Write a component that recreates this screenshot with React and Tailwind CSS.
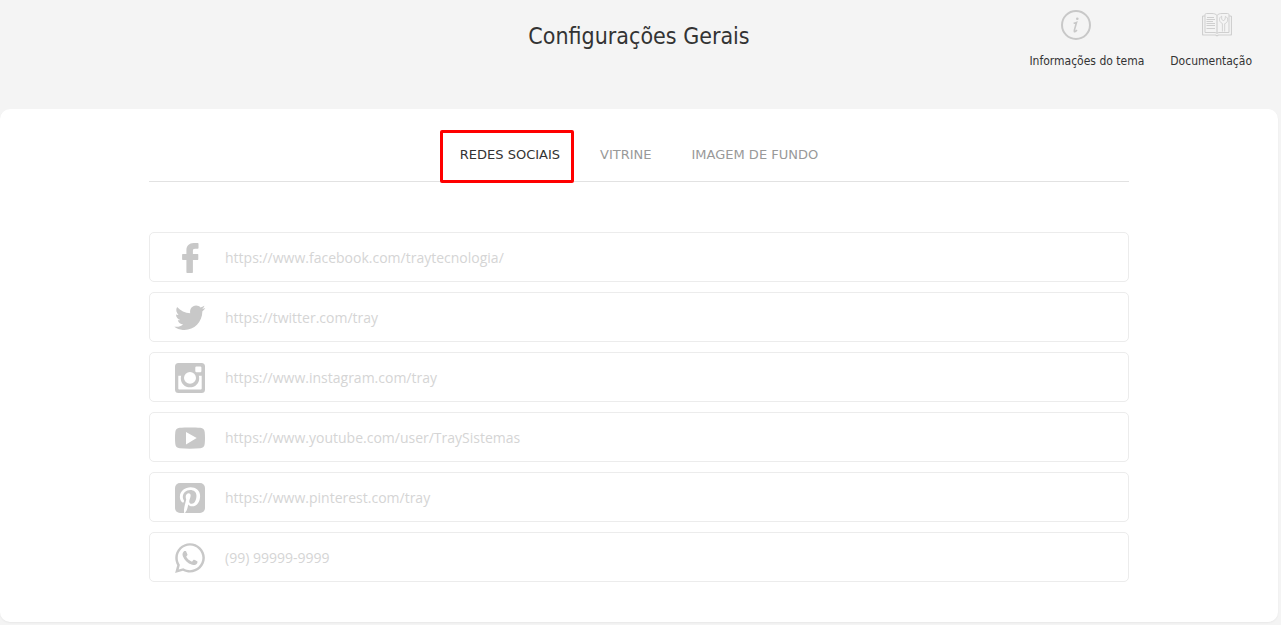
import { useState } from 'react'
import { FaPinterestP, FaWhatsapp } from 'react-icons/fa'

const TABS = ['Redes sociais', 'Vitrine', 'Imagem de fundo']

function FacebookIcon() {
  return (
    <svg viewBox="0 0 30 30" className="w-[30px] h-[30px]" fill="currentColor">
      <path d="M22.800.1h-4.200c-4.400 0-7.200 2.900-7.200 7.300v3.500H7.800c-.4 0-.7.3-.7.700v4.600c0 .4.300.700.7.700h3.600v12.400c0 .4.300.700.7.700h5.100c.4 0 .7-.3.700-.7V16.900h4.700c.4 0 .7-.3.700-.7v-4.600c0-.4-.3-.7-.7-.7h-4.700V8c0-1.400.4-2.200 2.200-2.200h2.700c.4 0 .7-.3.700-.7V.8c0-.4-.3-.7-.7-.7z"/>
    </svg>
  )
}

function TwitterIcon() {
  return (
    <svg viewBox="0 0 32 30" className="w-8 h-[30px]" fill="currentColor">
      <path d="M.300 23.700c3.500.5 6.500-.3 8.800-2.300-2.500-.3-4.600-1.700-5.300-4.200.9.200 1.700.1 2.500-.1-2.500-.9-4.200-2.900-4.300-5.700.8.300 1.600.6 2.500.5C2.300 9.900 1.500 6.800 3.100 4.100c3.500 3.900 7.900 5.900 13.100 6.200-.7-4.200 1.700-7.700 5.900-7.800 1.700 0 3.300.7 4.400 1.900 1.300-.3 2.600-.8 3.900-1.600-.4 1.400-1.200 2.400-2.200 3.200 1.200-.2 2.100-.5 3.100-1-.7 1.300-1.600 2.300-2.900 3.300-.2 11.600-9 19.500-19.600 18.600-3.100-.3-6.100-1.400-8.500-3.200z"/>
    </svg>
  )
}

function InstagramIcon() {
  return (
    <svg viewBox="0 0 30 30" className="w-[30px] h-[30px]" fill="currentColor">
      <path fillRule="evenodd" d="M3.5 0h23A3.5 3.5 0 0 1 30 3.5v23a3.5 3.5 0 0 1-3.5 3.5h-23A3.5 3.5 0 0 1 0 26.500v-23A3.500 3.500 0 0 1 3.500 0z
        M21.500 3.400a1.200 1.200 0 0 0-1.200 1.200v3.500a1.200 1.200 0 0 0 1.200 1.200h3.700a1.200 1.200 0 0 0 1.200-1.200v-3.500a1.200 1.200 0 0 0-1.200-1.200z
        M3.300 12.700v12.700c0 .7.500 1.200 1.200 1.200h21c.7 0 1.200-.5 1.200-1.200V12.700h-2.900c.3.900.4 1.800.4 2.700 0 5-4.100 8.900-9.200 8.900s-9.200-3.900-9.200-8.900c0-.9.100-1.800.4-2.700z
        M15 9a6 5.900 0 1 0 0 11.800a6 5.900 0 1 0 0-11.800z"/>
    </svg>
  )
}

function YoutubeIcon() {
  return (
    <svg viewBox="0 0 30 30" className="w-[30px] h-[30px]" fill="currentColor">
      <path fillRule="evenodd" d="M15 4.400c4.200 0 7.500.1 10.400.4 2.600.3 4 1.600 4.300 4.200.4 3.900.4 8.100 0 12-.3 2.600-1.700 3.900-4.300 4.200-6.400.6-14.400.6-20.800 0C2 24.900.6 23.600.3 21c-.4-3.900-.4-8.100 0-12C.6 6.400 2 5.100 4.600 4.800 7.500 4.500 10.800 4.400 15 4.400z
        M11 8.900v12.500L21.700 15z"/>
    </svg>
  )
}

function PinterestIcon() {
  return (
    <svg viewBox="0 0 30 30" className="w-[30px] h-[30px]">
      <rect width="30" height="30" rx="5" fill="currentColor"/>
      <FaPinterestP x="1.500" y="4" size={27} color="#fff"/>
    </svg>
  )
}

function InfoIcon() {
  return (
    <svg viewBox="0 0 30 30" className="w-[30px] h-[30px]" fill="none" stroke="#c8c8c8">
      <circle cx="15" cy="15" r="14" strokeWidth="2"/>
      <circle cx="16.300" cy="8.800" r="1.300" fill="#c8c8c8" stroke="none"/>
      <path d="M12.600 13.300c1-.1 1.900-.3 2.900-.8l-2 7.300c-.3 1.300-.2 2 .3 2 .7 0 1.400-.8 2.100-1.800" strokeWidth="1.600"/>
    </svg>
  )
}

function BookIcon() {
  return (
    <svg viewBox="0 0 30 30" className="w-[30px] h-[30px]" fill="none" stroke="#cfcfcf">
      <path d="M15 5.500C13.500 3.900 12 3.500 10 3.500H4.500c-1 0-1.500.5-1.500 1.500v17.500h9c1.500 0 2.500.3 3 .9.500-.6 1.500-.9 3-.9h9V5c0-1-.5-1.500-1.500-1.500H20c-2 0-3.500.4-5 2z"/>
      <path d="M3 6H1.500c-.7 0-1 .3-1 1v17c0 .7.300 1 1 1h12l1.500.8 1.500-.8h12c.7 0 1-.3 1-1V7c0-.7-.3-1-1-1H27M15 5.500v18" strokeWidth="1.200"/>
      <path d="M5 7.500h7M4.500 9.500h8.500M4.500 11.500h6.500M4.500 13.500h8.500M4.500 15.500h8.500M4.500 18.500h8.500"/>
      <path d="M20.400 21.500v-8c-1.900-.8-2.900-2.200-2.900-4 0-1.600.8-2.700 2.200-3.300v2.900l1.500 1.700 1.800-1.300.4-3.100c1.700.8 2.600 2 2.300 3.700-.2 1.800-1.300 3-3 3.600v7.800" strokeWidth=".9"/>
    </svg>
  )
}

const NETWORKS = [
  { id: 'facebook', label: 'Facebook', icon: <FacebookIcon/>, placeholder: 'https://www.facebook.com/traytecnologia/' },
  { id: 'twitter', label: 'Twitter', icon: <TwitterIcon/>, placeholder: 'https://twitter.com/tray' },
  { id: 'instagram', label: 'Instagram', icon: <InstagramIcon/>, placeholder: 'https://www.instagram.com/tray' },
  { id: 'youtube', label: 'YouTube', icon: <YoutubeIcon/>, placeholder: 'https://www.youtube.com/user/TraySistemas' },
  { id: 'pinterest', label: 'Pinterest', icon: <PinterestIcon/>, placeholder: 'https://www.pinterest.com/tray' },
  { id: 'whatsapp', label: 'WhatsApp', icon: <FaWhatsapp className="w-[34px] h-[34px]"/>, placeholder: '(99) 99999-9999' },
]

export default function App() {
  const [tab, setTab] = useState(TABS[0])
  const [values, setValues] = useState({})

  return (
    <div className="min-h-screen bg-[#f4f4f4] pr-[3px] font-[Tahoma,'DejaVu_Sans_Condensed','Noto_Sans',sans-serif] text-[#333]">
      <header className="grid grid-cols-[1fr_auto_1fr] items-start pt-2.5 pb-10">
        <h1 className="col-start-2 pt-2 text-[23px] leading-9">Configurações Gerais</h1>
        <nav className="flex justify-end gap-[26px] pr-[26px] text-xs">
          <a href="#info" className="flex flex-col gap-[13px]">
            <span className="pl-8"><InfoIcon/></span>
            <span className="leading-4">Informações do tema</span>
          </a>
          <a href="#docs" className="flex flex-col gap-[13px]">
            <span className="pl-8"><BookIcon/></span>
            <span className="leading-4">Documentação</span>
          </a>
        </nav>
      </header>

      <main className="bg-white rounded-[10px] shadow-xs px-6 pt-5 pb-10">
        <div className="max-w-[980px] mx-auto">
          <div role="tablist" className="flex justify-center border-b border-[#e2e2e2] font-[Verdana,'DejaVu_Sans',sans-serif]">
            {TABS.map(name => (
              <button key={name} role="tab" aria-selected={tab === name} onClick={() => setTab(name)}
                className={'relative px-5 py-4 text-[13px] leading-5 uppercase ' + (tab === name ? 'text-[#333]' : 'text-[#999]')}>
                {name}
                {tab === name && (
                  <span className="absolute left-0 right-1.5 top-px -bottom-0.5 border-3 border-[#f00] rounded-xs"/>
                )}
              </button>
            ))}
          </div>

          <div className="flex flex-col gap-2.5 pt-[50px]">
            {NETWORKS.map(n => (
              <div key={n.id} className="flex items-center h-[50px] border border-[#ececec] rounded-[5px]">
                <label htmlFor={n.id} aria-label={n.label} className="w-[75px] pl-[5px] pt-0.5 flex justify-center text-[#c8c8c8]">
                  {n.icon}
                </label>
                <input id={n.id} type="text" placeholder={n.placeholder} value={values[n.id] || ''}
                  onChange={e => setValues({ ...values, [n.id]: e.target.value })}
                  className="flex-1 h-full pr-4 bg-transparent outline-none font-['Open_Sans',sans-serif] text-sm text-[#666] placeholder:text-[#d5d5d5]"/>
              </div>
            ))}
          </div>
        </div>
      </main>
    </div>
  )
}
